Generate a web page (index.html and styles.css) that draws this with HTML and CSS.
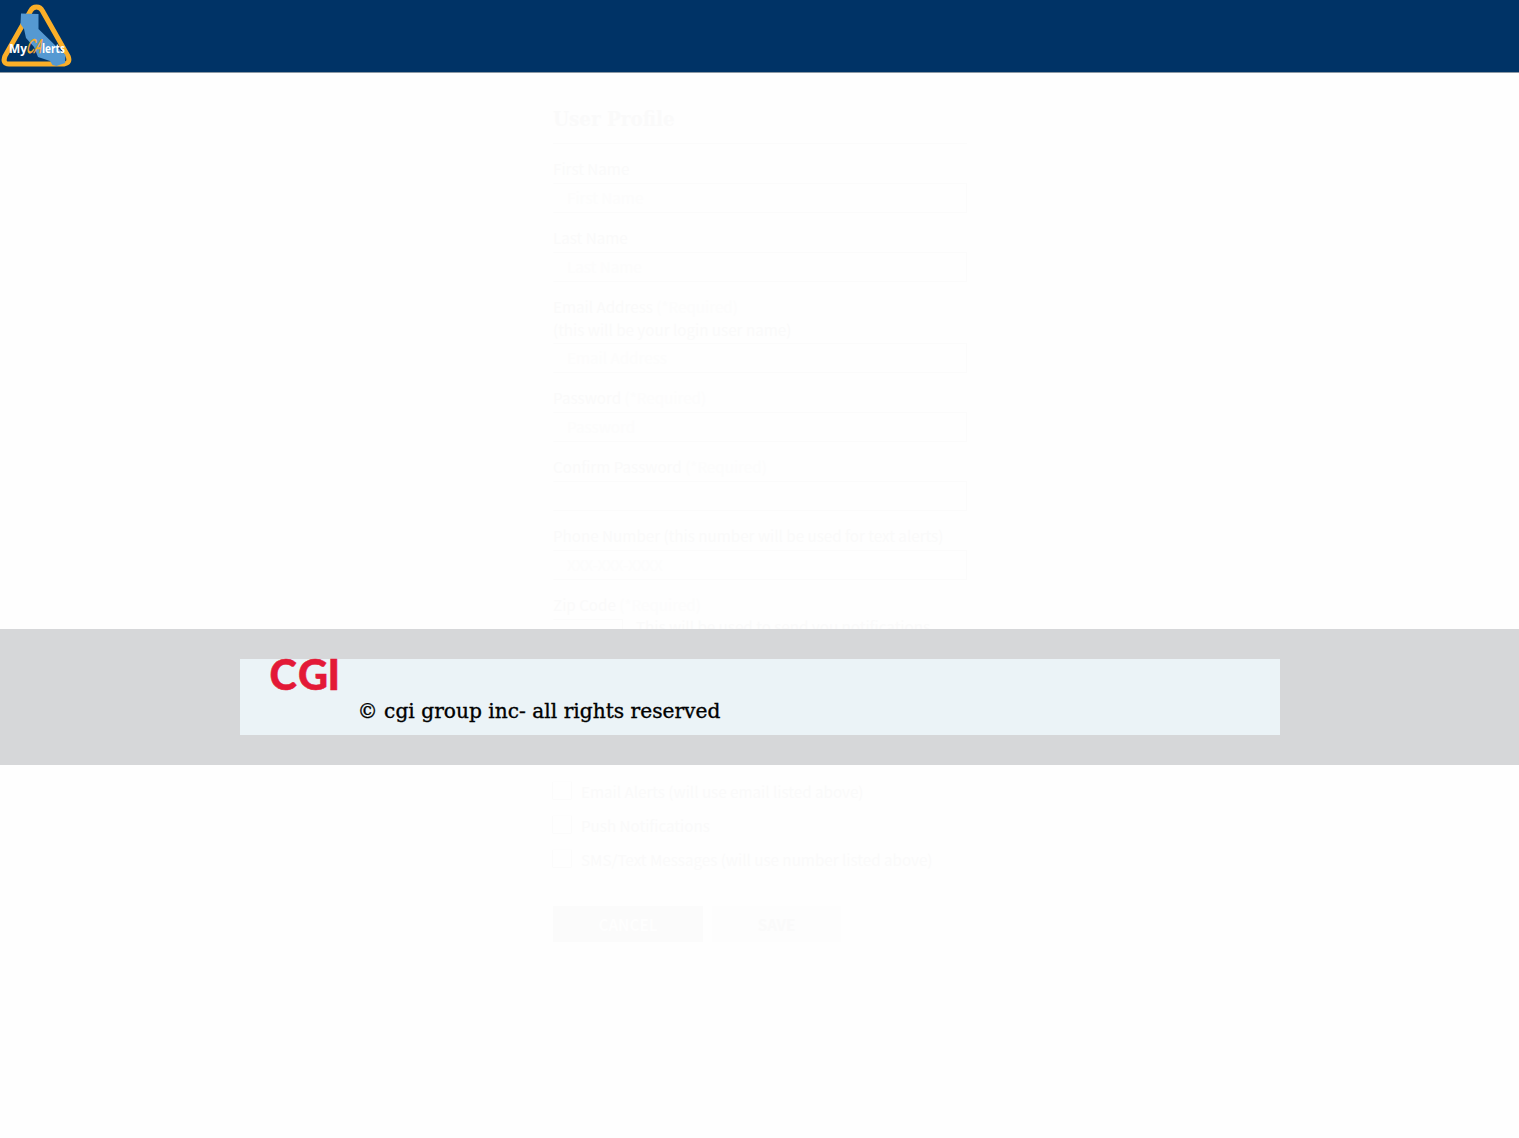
FILE: index.html
```html
<!DOCTYPE html>
<html lang="en">
<head>
<meta charset="utf-8">
<title>User Profile</title>
<link rel="stylesheet" href="styles.css">
</head>
<body>
<header class="topbar">
  <svg class="logo" width="74" height="72" viewBox="0 0 74 72" role="img" aria-label="My CAlerts">
    <path d="M36.5 7Q32.5 7 30.500 11L5 56Q2 64 9 64H64Q71 63 68 56L42.500 11Q40.500 7 36.500 7Z" fill="none" stroke="#fbaf28" stroke-width="5"/>
    <path d="M21 13.500L38.500 14V29L59 49L65.500 55L65 63L56.500 66L52.500 65L50 61L38 57L34 47L26 38L24 29L20.500 24Z" fill="#5599d2"/>
    <text class="logo-word" x="9" y="52.500" textLength="18" lengthAdjust="spacingAndGlyphs">My</text>
    <text class="logo-state" transform="translate(26 52.500) skewX(-14)" textLength="15" lengthAdjust="spacingAndGlyphs">CA</text>
    <text class="logo-word" x="42" y="52.500" textLength="23" lengthAdjust="spacingAndGlyphs">lerts</text>
  </svg>
</header>
<main class="content">
  <form class="profile">
    <h1 class="title">User Profile</h1>
    <div class="field"><label class="label">First Name</label><input class="input" placeholder="First Name"></div>
    <div class="field"><label class="label">Last Name</label><input class="input" placeholder="Last Name"></div>
    <div class="field"><label class="label">Email Address <span class="required">(*Required)</span><br>(this will be your login user name)</label><input class="input" placeholder="Email Address"></div>
    <div class="field"><label class="label">Password <span class="required">(*Required)</span></label><input class="input" placeholder="Password"></div>
    <div class="field"><label class="label">Confirm Password <span class="required">(*Required)</span></label><input class="input"></div>
    <div class="field"><label class="label">Phone Number (this number will be used for text alerts)</label><input class="input" placeholder="XXX-XXX-XXXX"></div>
    <div class="field zip"><label class="label">Zip Code <span class="required">(*Required)</span></label>
      <div class="zip-row"><input class="input zip-input"><span>This will be used to send you notifications</span></div>
    </div>
    <div class="options">
      <label class="option"><span class="box"></span>Email Alerts (will use email listed above)</label>
      <label class="option"><span class="box"></span>Push Notifications</label>
      <label class="option"><span class="box"></span>SMS/Text Messages (will use number listed above)</label>
    </div>
    <div class="actions"><button class="button cancel" type="button">CANCEL</button><button class="button save" type="button">SAVE</button></div>
  </form>
</main>
<footer class="footer">
  <div class="footer-inner">
    <svg class="cgi" width="70" height="34" viewBox="0 0 70 34"><text class="cgi-text" x="-0.500 28 57.500" y="31">CGI</text></svg>
    <p class="copyright">© cgi group inc- all rights reserved</p>
  </div>
</footer>
</body>
</html>
```
FILE: styles.css
```css
* { box-sizing: border-box; }
body {
  margin: 0;
  min-height: 1138px;
  background: #fefefe;
  color: #fafafa;
  font: 15.2px/22.4px "Noto Sans CJK SC", "Open Sans", sans-serif;
}
.topbar { height: 73px; background: #003366; border-bottom: 1px solid #8c99a5; }
.logo { display: block; }
.logo-word { fill: #fff; font: bold 12.5px "Open Sans", sans-serif; }
.logo-state { fill: #fbaf28; stroke: #fbaf28; stroke-width: 0.4; font: italic 20px "Liberation Sans", sans-serif; }

.content { height: 556px; }
.profile { width: 414px; margin: 0 auto; padding-top: 24px; position: relative; left: 0.5px; }
.title {
  height: 47px;
  margin: 0 0 16.8px;
  border-bottom: 1px solid #fbfbfb;
  color: #fafafa;
  font: bold 20.4px/44px "DejaVu Serif Condensed", "DejaVu Serif", serif;
  font-stretch: condensed;
}
.field { display: flex; flex-direction: column; margin-bottom: 16.5px; }
.label { margin: -3.5px 0 3.5px; }
.required { color: #fcfcfc; }
.input {
  height: 30px;
  width: 100%;
  padding: 0 13px 2px;
  border: 1px solid #fbfbfb;
  border-left-color: #fefefe;
  background: #fefefe;
  color: #fafafa;
  font: inherit;
  outline: 0;
}
.input::placeholder { color: #fcfcfc; opacity: 1; }
.zip { height: 160px; margin-bottom: 0; }
.zip-row { display: flex; gap: 13px; line-height: 15px; }
.zip-input { width: 70px; }
.options { display: flex; flex-direction: column; gap: 11px; padding-top: 23px; }
.option { display: flex; align-items: center; gap: 9px; height: 23px; line-height: 20px; padding-bottom: 1px; }
.box { width: 20px; height: 19px; margin-left: -1px; border: 1px solid #fbfbfb; border-top-color: #fdfdfd; border-radius: 2px; }
.actions { display: flex; gap: 9px; margin-top: 35px; }
.button { height: 36px; border: 0; padding: 0; font: bold 15.2px/34px "Noto Sans CJK SC", "Open Sans", sans-serif; }
.cancel { width: 150px; background: #fbfbfb; color: #fefefe; }
.save { width: 129px; background: #fdfdfd; color: #fafafa; }

.footer { position: relative; height: 136px; padding: 30px 0; background: #d6d7d9; }
.footer-inner { width: 1040px; height: 76px; margin: 0 auto; padding-left: 30px; display: flex; background: #ebf3f7; }
.cgi { flex: none; overflow: visible; }
.cgi-text { fill: #e31937; stroke: #e31937; stroke-width: 0.5; font: 900 41.5px Lato, sans-serif; }
.copyright {
  margin: 37px 0 0 18px;
  color: #000;
  font: 20.2px/30px "DejaVu Serif", serif;
  -webkit-text-stroke: 0.35px #000;
  white-space: nowrap;
}
```
